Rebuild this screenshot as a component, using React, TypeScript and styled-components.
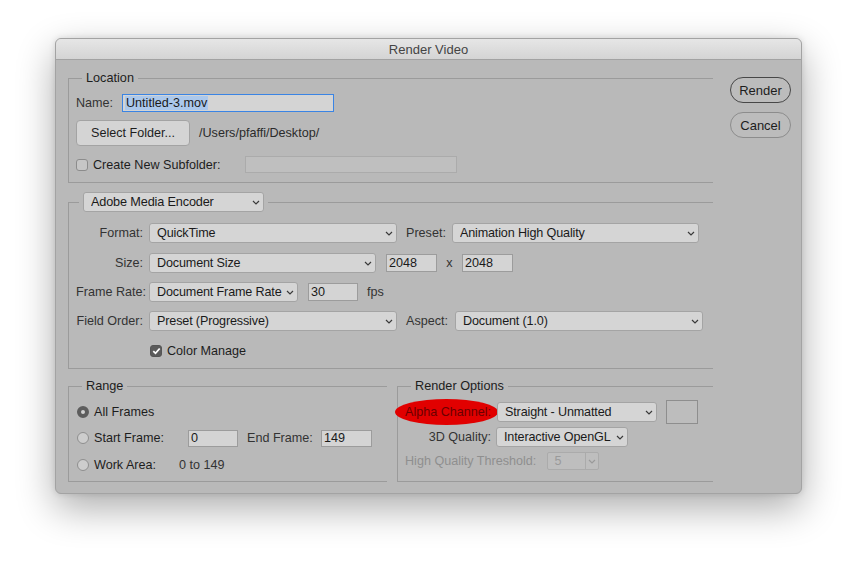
import React from 'react';
import styled, { createGlobalStyle, css } from 'styled-components';

const GlobalStyle = createGlobalStyle`
  html, body {
    margin: 0;
    padding: 0;
    background: #ffffff;
  }
  body {
    font-family: "Liberation Sans", Arial, sans-serif;
    font-size: 12.6px;
    color: #1d1d1d;
  }
`;

const Stage = styled.div`
  width: 857px;
  height: 568px;
  box-sizing: border-box;
  padding: 38px 0 0 55px;
`;

const Dialog = styled.div`
  width: 747px;
  height: 456px;
  box-sizing: border-box;
  background: #b9b9b9;
  border: 1px solid #a3a3a3;
  border-radius: 6px;
  overflow: hidden;
  box-shadow: 0 14px 38px rgba(0, 0, 0, 0.33), 0 0 6px rgba(0, 0, 0, 0.12);
`;

const TitleBar = styled.div`
  height: 20px;
  border-bottom: 1px solid #a2a2a2;
  background: linear-gradient(#e6e6e6, #d4d4d4);
  display: flex;
  align-items: center;
  justify-content: center;
  font-size: 13px;
  color: #444;
`;

const Body = styled.div`
  display: flex;
  padding: 10px 0 0 12px;
`;

const Main = styled.div`
  width: 645px;
  display: flex;
  flex-direction: column;
`;

const Side = styled.div`
  display: flex;
  flex-direction: column;
  gap: 9px;
  margin-left: 17px;
  padding-top: 7px;
`;

const PillButton = styled.div<{ $primary?: boolean }>`
  width: 61px;
  height: 26px;
  box-sizing: border-box;
  border-radius: 13px;
  border: 1px solid ${p => (p.$primary ? '#474747' : '#8c8c8c')};
  background: #bcbcbc;
  display: flex;
  align-items: center;
  justify-content: center;
  font-size: 13px;
  color: #1d1d1d;
`;

const Group = styled.fieldset<{ $w?: number; $mt?: number }>`
  margin: ${p => p.$mt ?? 0}px 0 0 0;
  padding: 0;
  min-width: 0;
  ${p => p.$w && css`width: ${p.$w}px;`}
  box-sizing: border-box;
  border: 1px solid #9b9b9b;
  border-right: none;
`;

const Legend = styled.legend<{ $ml?: number }>`
  margin-left: ${p => p.$ml ?? 13}px;
  padding: 0 4px;
  line-height: 16px;
  font-size: 12.7px;
  color: #1d1d1d;
`;

const GroupBody = styled.div<{ $pt: number; $pb: number; $pl: number }>`
  display: flex;
  flex-direction: column;
  padding: ${p => p.$pt}px 0 ${p => p.$pb}px ${p => p.$pl}px;
`;

const Row = styled.div<{ $h: number; $mt?: number }>`
  display: flex;
  align-items: center;
  height: ${p => p.$h}px;
  margin-top: ${p => p.$mt ?? 0}px;
  white-space: nowrap;
`;

const Label = styled.span<{
  $w?: number;
  $ml?: number;
  $right?: boolean;
  $center?: boolean;
  $gap?: number;
  $dim?: boolean;
}>`
  ${p => p.$w && css`width: ${p.$w}px; flex-shrink: 0;`}
  text-align: ${p => (p.$right ? 'right' : p.$center ? 'center' : 'left')};
  margin-left: ${p => p.$ml ?? 0}px;
  margin-right: ${p => p.$gap ?? 0}px;
  color: ${p => (p.$dim ? '#8f8f8f' : '#333')};
`;

const Text = styled.span<{ $ml?: number; $color?: string }>`
  margin-left: ${p => p.$ml ?? 0}px;
  color: ${p => p.$color ?? '#1d1d1d'};
`;

const Field = styled.div<{ $w: number; $h?: number; $ml?: number; $focus?: boolean }>`
  width: ${p => p.$w}px;
  height: ${p => p.$h ?? 18}px;
  margin-left: ${p => p.$ml ?? 0}px;
  box-sizing: border-box;
  flex-shrink: 0;
  background: #d4d4d4;
  border: 1px solid ${p => (p.$focus ? '#3a84e4' : '#9c9c9c')};
  padding-left: 2px;
  display: flex;
  align-items: center;
  color: #1a1a1a;
`;

const Selected = styled.span`
  background: #abc8ec;
  padding: 0 1px;
`;

const DisabledField = styled.div<{ $w: number }>`
  width: ${p => p.$w}px;
  height: 17px;
  box-sizing: border-box;
  background: #bfbfbf;
  border: 1px solid #ababab;
`;

const SelectBox = styled.div<{ $w: number; $h?: number; $ml?: number }>`
  width: ${p => p.$w}px;
  height: ${p => p.$h ?? 20}px;
  margin-left: ${p => p.$ml ?? 0}px;
  box-sizing: border-box;
  flex-shrink: 0;
  background: #d5d5d5;
  border: 1px solid #a4a4a4;
  border-radius: 3px;
  display: flex;
  align-items: center;
  padding: 0 3px 0 7px;
  color: #1a1a1a;
  position: relative;
  z-index: 1;

  svg {
    flex-shrink: 0;
  }
`;

const SelectText = styled.span`
  flex: 1;
  overflow: hidden;
  letter-spacing: -0.15px;
`;

const Combo = styled.div<{ $w: number }>`
  width: ${p => p.$w}px;
  height: 18px;
  box-sizing: border-box;
  display: flex;
  border: 1px solid #ababab;
  border-radius: 2px;
  background: #bebebe;
  color: #9a9a9a;
`;

const ComboText = styled.span`
  flex: 1;
  padding-left: 6px;
  display: flex;
  align-items: center;
  border-right: 1px solid #ababab;
`;

const ComboButton = styled.span`
  width: 12px;
  display: flex;
  align-items: center;
  justify-content: center;
`;

const PushButton = styled.div`
  width: 114px;
  height: 26px;
  box-sizing: border-box;
  background: #d4d4d4;
  border: 1px solid #a3a3a3;
  border-radius: 4px;
  display: flex;
  align-items: center;
  justify-content: center;
  margin-right: 9px;
`;

const CheckBox = styled.span<{ $on?: boolean }>`
  width: 12px;
  height: 12px;
  box-sizing: border-box;
  border-radius: 3px;
  flex-shrink: 0;
  border: 1px solid ${p => (p.$on ? '#555' : '#8c8c8c')};
  background: ${p => (p.$on ? '#5b5b5b' : '#c6c6c6')};
  display: flex;
  align-items: center;
  justify-content: center;
  margin-right: 5px;
`;

const RadioDot = styled.span<{ $on?: boolean }>`
  width: 12px;
  height: 12px;
  box-sizing: border-box;
  border-radius: 50%;
  flex-shrink: 0;
  margin-right: 5px;
  border: ${p => (p.$on ? '4px solid #5d5d5d' : '1px solid #8f8f8f')};
  background: ${p => (p.$on ? '#d2d2d2' : '#cdcdcd')};
`;

const Option = styled.span<{ $w: number; $ml?: number }>`
  width: ${p => p.$w}px;
  margin-left: ${p => p.$ml ?? 0}px;
  display: flex;
  align-items: center;
  flex-shrink: 0;
`;

const AlphaLabel = styled.span`
  width: 86px;
  margin-right: 6px;
  text-align: right;
  position: relative;
  color: #6a0000;

  &::before {
    content: '';
    position: absolute;
    left: -10px;
    right: -7px;
    top: -6px;
    bottom: -6px;
    border-radius: 50%;
    background: #e10000;
    z-index: -1;
  }
`;

const AlphaRow = styled(Row)`
  position: relative;
  z-index: 0;
`;

const Swatch = styled.div`
  width: 32px;
  height: 24px;
  box-sizing: border-box;
  margin-left: 9px;
  border: 1px solid #8e8e8e;
  background: #bdbdbd;
`;

const BottomRow = styled.div`
  display: flex;
  gap: 10px;
  margin-top: 9px;
`;

const Chevron = ({ color = '#3a3a3a' }: { color?: string }) => (
  <svg width="8" height="5" viewBox="0 0 8 5">
    <path d="M1 1 L4 4 L7 1" fill="none" stroke={color} strokeWidth="1.2" />
  </svg>
);

const Check = () => (
  <svg width="9" height="8" viewBox="0 0 9 8">
    <path d="M1.3 4.2 L3.5 6.3 L7.7 1.5" fill="none" stroke="#fff" strokeWidth="1.8" />
  </svg>
);

const Select = ({ w, h, ml, children }: { w: number; h?: number; ml?: number; children: React.ReactNode }) => (
  <SelectBox $w={w} $h={h} $ml={ml}>
    <SelectText>{children}</SelectText>
    <Chevron />
  </SelectBox>
);

const App = () => (
  <>
    <GlobalStyle />
    <Stage>
      <Dialog>
        <TitleBar>Render Video</TitleBar>
        <Body>
          <Main>
            <Group>
              <Legend>Location</Legend>
              <GroupBody $pt={8} $pb={9} $pl={7}>
                <Row $h={18}>
                  <Label $w={46}>Name:</Label>
                  <Field $w={212} $focus>
                    <Selected>Untitled-3.mov</Selected>
                  </Field>
                </Row>
                <Row $h={26} $mt={8}>
                  <PushButton>Select Folder...</PushButton>
                  <Text $color="#2b2b2b">/Users/pfaffi/Desktop/</Text>
                </Row>
                <Row $h={17} $mt={10}>
                  <Option $w={169}>
                    <CheckBox />
                    <Text>Create New Subfolder:</Text>
                  </Option>
                  <DisabledField $w={212} />
                </Row>
              </GroupBody>
            </Group>

            <Group $mt={9}>
              <Legend $ml={10}>
                <Select w={181}>Adobe Media Encoder</Select>
              </Legend>
              <GroupBody $pt={11} $pb={9} $pl={7}>
                <Row $h={20}>
                  <Label $w={67} $right $gap={6}>Format:</Label>
                  <Select w={248}>QuickTime</Select>
                  <Text $ml={9} $color="#333">Preset:</Text>
                  <Select w={247} ml={6}>Animation High Quality</Select>
                </Row>
                <Row $h={20} $mt={10}>
                  <Label $w={67} $right $gap={6}>Size:</Label>
                  <Select w={227}>Document Size</Select>
                  <Field $w={51} $ml={10}>2048</Field>
                  <Label $w={25} $center>x</Label>
                  <Field $w={51}>2048</Field>
                </Row>
                <Row $h={20} $mt={9}>
                  <Label $w={67} $right $gap={6}>Frame Rate:</Label>
                  <Select w={149}>Document Frame Rate</Select>
                  <Field $w={50} $ml={10}>30</Field>
                  <Text $ml={9} $color="#333">fps</Text>
                </Row>
                <Row $h={20} $mt={9}>
                  <Label $w={67} $right $gap={6}>Field Order:</Label>
                  <Select w={248}>Preset (Progressive)</Select>
                  <Text $ml={9} $color="#333">Aspect:</Text>
                  <Select w={248} ml={7}>Document (1.0)</Select>
                </Row>
                <Row $h={16} $mt={12}>
                  <Option $w={200} $ml={74}>
                    <CheckBox $on>
                      <Check />
                    </CheckBox>
                    <Text>Color Manage</Text>
                  </Option>
                </Row>
              </GroupBody>
            </Group>

            <BottomRow>
              <Group $w={319}>
                <Legend>Range</Legend>
                <GroupBody $pt={8} $pb={6} $pl={8}>
                  <Row $h={20}>
                    <RadioDot $on />
                    <Text>All Frames</Text>
                  </Row>
                  <Row $h={20} $mt={6}>
                    <Option $w={111}>
                      <RadioDot />
                      <Text>Start Frame:</Text>
                    </Option>
                    <Field $w={50} $h={17}>0</Field>
                    <Label $w={74} $ml={9}>End Frame:</Label>
                    <Field $w={51} $h={17}>149</Field>
                  </Row>
                  <Row $h={20} $mt={7}>
                    <Option $w={102}>
                      <RadioDot />
                      <Text>Work Area:</Text>
                    </Option>
                    <Text $color="#333">0 to 149</Text>
                  </Row>
                </GroupBody>
              </Group>

              <Group $w={316}>
                <Legend>Render Options</Legend>
                <GroupBody $pt={6} $pb={10} $pl={7}>
                  <AlphaRow $h={24}>
                    <AlphaLabel>Alpha Channel:</AlphaLabel>
                    <Select w={160}>Straight - Unmatted</Select>
                    <Swatch />
                  </AlphaRow>
                  <Row $h={20} $mt={3}>
                    <Label $w={86} $right $gap={5}>3D Quality:</Label>
                    <Select w={132}>Interactive OpenGL</Select>
                  </Row>
                  <Row $h={18} $mt={5}>
                    <Label $dim $gap={11}>High Quality Threshold:</Label>
                    <Combo $w={52}>
                      <ComboText>5</ComboText>
                      <ComboButton>
                        <Chevron color="#9a9a9a" />
                      </ComboButton>
                    </Combo>
                  </Row>
                </GroupBody>
              </Group>
            </BottomRow>
          </Main>

          <Side>
            <PillButton $primary>Render</PillButton>
            <PillButton>Cancel</PillButton>
          </Side>
        </Body>
      </Dialog>
    </Stage>
  </>
);

export default App;
